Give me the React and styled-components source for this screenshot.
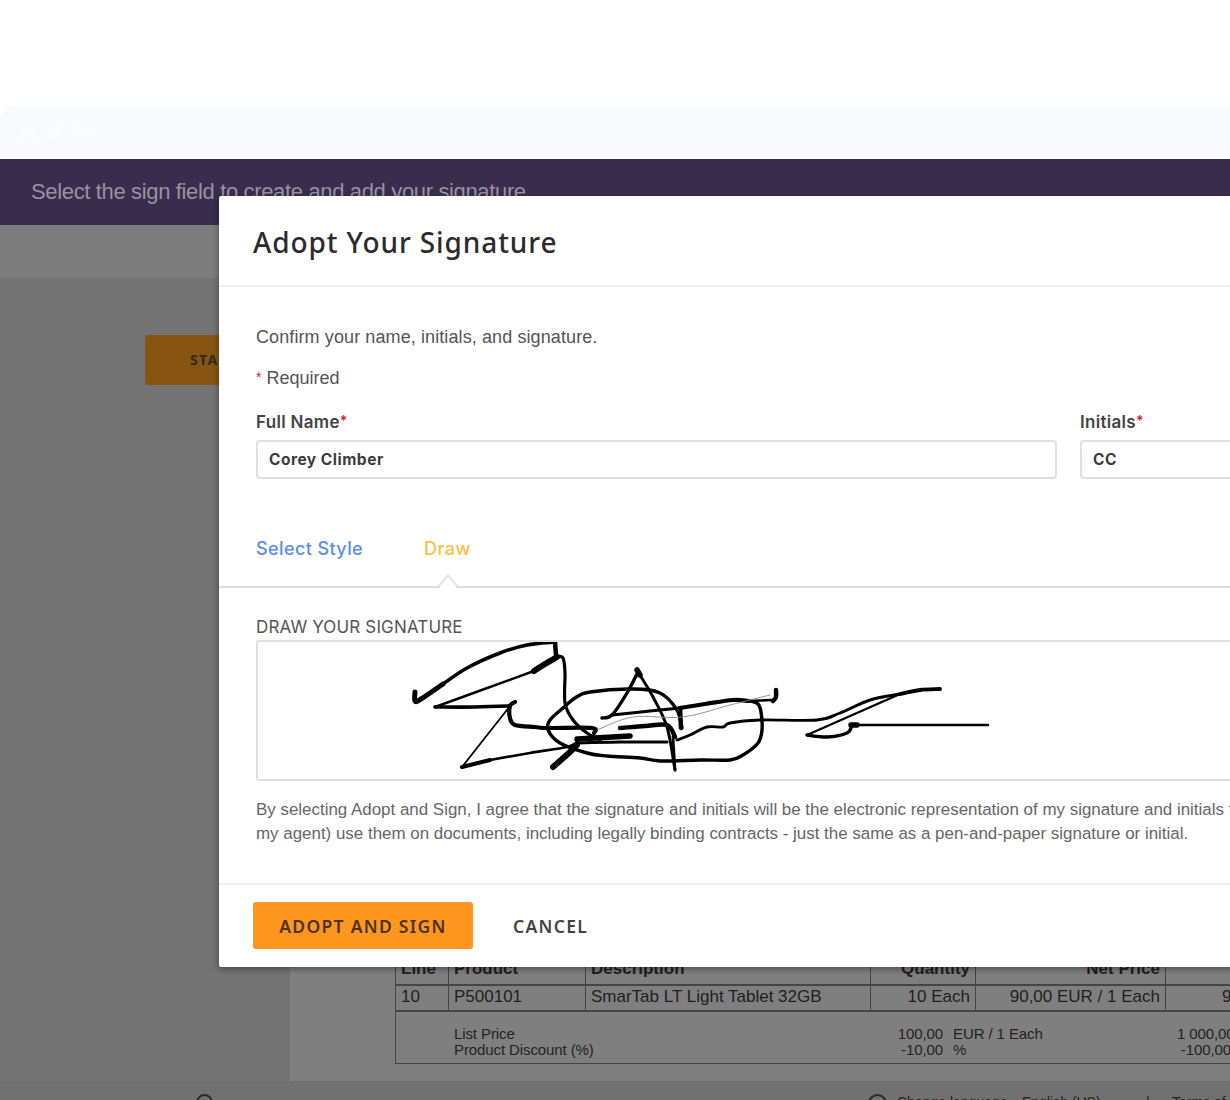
import React from "react";
import styled, { createGlobalStyle } from "styled-components";

const Global = createGlobalStyle`
  html, body { margin: 0; padding: 0; background: #fff; }
  * { box-sizing: border-box; }
`;
const Sans = `"Liberation Sans", Arial, sans-serif`;
const Ui = `"Inter", "Liberation Sans", sans-serif`;
const Title = `"Noto Sans", "Open Sans", sans-serif`;

const Page = styled.div`
  position: relative; width: 1230px; height: 1100px; overflow: hidden;
  padding-top: 107px; background: #fff; font-family: ${Sans};
`;
const Chrome = styled.div`
  height: 52px; background: #f9fafb; border-radius: 14px 0 0 0;
  display: flex; align-items: center; gap: 13px; padding-left: 21px;
`;
const Dot = styled.span`width: 14px; height: 14px; border-radius: 50%; background: #fbfcfd;`;
const Banner = styled.div`
  height: 66px; background: #392d4d; color: #98929f; font-size: 22px;
  letter-spacing: -0.35px; padding: 20px 0 0 31px; white-space: nowrap;
`;
const Toolbar = styled.div`height: 55px; background: #7c7c7c; border-bottom: 2px solid #737373;`;
const Body = styled.div`display: flex; height: 801px;`;
const Side = styled.div`
  width: 290px; background: #737373; padding: 55px 0 0 145px; border-right: 1px solid #6f6f6f;
`;
const Start = styled.div`
  width: 130px; height: 50px; background: #875511; border-radius: 2px; color: #2e2a20;
  font: 700 14px ${Title}; letter-spacing: 1.4px; padding: 15px 0 0 45px;
`;
const Doc = styled.div`flex: 1; background: #7f7f7f; padding: 678px 0 0 105px; overflow: hidden;`;
const Table = styled.div`
  width: 1000px; border: 1.5px solid #444; border-top: 0; color: #1e1e1e; font-size: 17px;
`;
const Row = styled.div`
  display: grid; grid-template-columns: 53px 137px 285px 105px 190px 1fr;
  height: ${p => p.$h}px; border-bottom: 2px solid #454545;
`;
const Cell = styled.div`
  border-right: 1.5px solid #444; padding: 0 5px; line-height: 22px; white-space: nowrap;
  font-weight: ${p => (p.$head ? 700 : 400)}; text-align: ${p => (p.$right ? "right" : "left")};
  overflow: hidden;
`;
const LastCell = styled.div`padding: 0 0 0 56px; line-height: 22px; white-space: nowrap;`;
const Details = styled.div`
  height: 51px; padding: 14px 0 0 58px; display: grid; color: #232323;
  grid-template-columns: 433px 56px 234px 54px; font-size: 15px; line-height: 16px; letter-spacing: -0.1px;
`;
const Num = styled.div`text-align: right; white-space: nowrap;`;
const Unit = styled.div`padding-left: 10px; white-space: nowrap;`;
const Footer = styled.div`
  height: 60px; background: #717171; border-top: 1px solid #6d6d6d;
  display: flex; padding: 12px 0 0 196px; color: #1f1f1f; font-size: 14px; position: absolute;
  left: 0; right: 0; top: 1081px;
`;
const Help = styled.div`display: flex; margin-left: 655px; align-items: flex-start; white-space: nowrap;`;
const HelpItem = styled.span`width: ${p => p.$w}px; flex: none;`;
const Ring = styled.span`
  width: ${p => p.$s}px; height: ${p => p.$s}px; border-radius: 50%; border: 2px solid #2a2a2a;
  display: block; flex: none; margin-right: ${p => p.$m}px;
`;

const Modal = styled.div`
  position: absolute; left: 219px; top: 196px; width: 1100px; height: 771px; background: #fff;
  border-radius: 2px; box-shadow: 0 2px 6px rgba(0,0,0,.4); display: flex; flex-direction: column;
`;
const Head = styled.h2`
  margin: 0; height: 91px; padding: 26px 0 0 34px; border-bottom: 2px solid #efefef;
  font: 500 28px/40px ${Title}; letter-spacing: 0.9px; color: #2c2c2c;
`;
const Content = styled.div`padding: 39px 0 0 37px; flex: 1;`;
const Lead = styled.p`margin: 0; font-size: 18px; line-height: 22px; color: #555; letter-spacing: 0.1px;`;
const Req = styled.p`margin: 18px 0 0; font-size: 18px; line-height: 22px; color: #555;`;
const Star = styled.span`color: #e0202c; font-size: 14px; vertical-align: 2px;`;
const Fields = styled.div`display: flex; gap: 23px; margin-top: 21px;`;
const Field = styled.div`width: ${p => p.$w}px;`;
const Label = styled.label`display: block; font: 600 17px/22px ${Ui}; letter-spacing: 0.3px; color: #444;`;
const Input = styled.div`
  height: 39px; margin-top: 7px; border: 2px solid #e0e0e0; border-radius: 4px;
  padding: 0 11px; font: 700 15.5px/35px ${Ui}; letter-spacing: 0.5px; color: #3c3c3c; background: #fff;
`;
const Tabs = styled.div`
  display: flex; gap: 61px; margin: 59px 0 0 -37px; padding: 0 0 0 37px; height: 50px;
  border-bottom: 2px solid #dcdcdc; position: relative;
`;
const Tab = styled.span`font: 500 18px/22px ${Ui}; letter-spacing: 0.4px; color: ${p => p.$c};`;
const Caret = styled.span`
  position: absolute; left: 219px; bottom: -2px; width: 20px; height: 14px; display: block;
`;
const Cap = styled.div`margin-top: 28px; font: 400 17px/22px ${Ui}; letter-spacing: 0.15px; color: #555;`;
const Canvas = styled.div`
  height: 141px; border: 2px solid #e0e0e0; border-radius: 3px; margin-top: 2px; padding-left: 142px;
`;
const Legal = styled.p`
  margin: 17px 0 0; font-size: 16.93px; line-height: 24px; color: #666; white-space: nowrap;
`;
const Foot = styled.div`
  height: 84px; border-top: 2px solid #f1f1f1; display: flex; align-items: flex-start;
  padding: 17px 0 0 34px; gap: 40px; flex: none;
`;
const Primary = styled.button`
  width: 220px; height: 47px; border: 0; border-radius: 3px; background: #ff961f; color: #4b3415;
  font: 600 17.5px ${Title}; letter-spacing: 1.3px; padding: 0;
`;
const Ghost = styled.button`
  border: 0; background: none; height: 47px; padding: 0; color: #444;
  font: 600 17.5px ${Title}; letter-spacing: 1.3px;
`;

/* Catmull-Rom through the pen points, so each pen stroke is a smooth curve */
const curve = pts => {
  let d = `M${pts[0][0]} ${pts[0][1]}`;
  for (let i = 0; i < pts.length - 1; i++) {
    const p0 = pts[i - 1] || pts[i];
    const p1 = pts[i];
    const p2 = pts[i + 1];
    const p3 = pts[i + 2] || p2;
    const c1 = [p1[0] + (p2[0] - p0[0]) / 6, p1[1] + (p2[1] - p0[1]) / 6];
    const c2 = [p2[0] - (p3[0] - p1[0]) / 6, p2[1] - (p3[1] - p1[1]) / 6];
    d += `C${c1[0].toFixed(1)} ${c1[1].toFixed(1)} ${c2[0].toFixed(1)} ${c2[1].toFixed(1)} ${p2[0]} ${p2[1]}`;
  }
  return d;
};

const strokes = [
  [5, [[415, 692], [415, 701], [421, 699], [443, 684]]],
  [3.6, [[443, 684], [467, 668], [500, 653], [527, 645], [555, 642]]],
  [4.5, [[555, 642], [556, 655]]],
  [6, [[557, 657], [545, 664], [534, 671]]],
  [2.4, [[534, 671], [435, 707]]],
  [3.6, [[435, 707], [475, 707], [510, 706]]],
  [3.2, [[556, 656], [563, 658], [565, 673], [565, 703], [573, 720], [587, 733], [600, 740]]],
  [4.2, [[515, 702], [510, 706], [510, 718], [515, 725], [535, 727], [547, 728], [592, 728], [594, 733]]],
  [1.8, [[510, 706], [462, 767]]],
  [4, [[462, 767], [490, 760]]],
  [2.7, [[490, 760], [530, 753], [567, 747], [577, 742]]],
  [5.5, [[577, 739], [630, 736]]],
  [3, [[577, 743], [620, 742], [667, 742]]],
  [3.4, [[563, 708], [575, 698], [590, 692], [633, 689], [660, 693], [677, 710], [682, 728]]],
  [3.4, [[563, 708], [550, 720], [548, 730], [560, 743], [587, 753], [607, 756], [640, 758], [660, 761], [700, 760], [730, 760], [743, 755], [758, 743], [762, 730], [761, 712], [758, 704], [750, 701]]],
  [6, [[553, 767], [570, 752], [577, 745]]],
  [3.4, [[602, 718], [612, 715], [627, 693], [638, 672]]],
  [3, [[638, 672], [653, 697], [667, 727], [675, 770]]],
  [2.7, [[673, 737], [675, 770]]],
  [5.5, [[637, 670], [640, 675]]],
  [3, [[612, 715], [650, 711], [680, 708]]],
  [4.2, [[680, 708], [705, 704], [733, 700], [748, 701]]],
  [2.7, [[748, 701], [773, 700]]],
  [4.5, [[773, 701], [776, 697], [776, 690]]],
  [4.5, [[620, 728], [645, 726], [667, 725], [675, 737]]],
  [4.5, [[680, 708], [681, 728]]],
  [0.9, [[597, 730], [633, 717], [683, 717], [730, 705], [770, 695]], "#888"],
  [2.9, [[677, 740], [690, 735], [707, 727], [723, 727], [730, 723], [760, 720], [817, 720], [840, 713], [870, 700], [900, 694]]],
  [3.8, [[900, 694], [920, 690], [940, 689]]],
  [2.4, [[900, 694], [807, 735]]],
  [3.4, [[807, 735], [827, 737], [847, 733], [852, 725]]],
  [5.5, [[851, 725], [857, 725]]],
  [2.4, [[857, 725], [920, 725], [988, 725]]],
];

const Signature = () => (
  <svg width="600" height="137" viewBox="400 642 600 137" fill="none" stroke="#000" strokeLinecap="round" strokeLinejoin="round" style={{ display: "block" }}>
    {strokes.map(([w, pts, c], i) => (
      <path key={i} d={curve(pts)} strokeWidth={w} stroke={c || "#000"} />
    ))}
  </svg>
);

export default function App() {
  return (
    <Page>
      <Global />
      <Chrome><Dot /><Dot /><Dot /></Chrome>
      <Banner>Select the sign field to create and add your signature</Banner>
      <Toolbar />
      <Body>
        <Side><Start>START</Start></Side>
        <Doc>
          <Table>
            <Row $h={28}>
              <Cell $head>Line</Cell><Cell $head>Product</Cell><Cell $head>Description</Cell>
              <Cell $head $right>Quantity</Cell><Cell $head $right>Net Price</Cell><LastCell />
            </Row>
            <Row $h={26}>
              <Cell>10</Cell><Cell>P500101</Cell><Cell>SmarTab LT Light Tablet 32GB</Cell>
              <Cell $right>10 Each</Cell><Cell $right>90,00 EUR / 1 Each</Cell><LastCell>900,00 EUR</LastCell>
            </Row>
            <Details>
              <div>List Price<br />Product Discount (%)</div>
              <Num>100,00<br />-10,00</Num>
              <Unit>EUR / 1 Each<br />%</Unit>
              <Num>1 000,00<br />-100,00</Num>
            </Details>
          </Table>
        </Doc>
      </Body>
      <Footer>
        <Ring $s={17} />
        <Help>
          <Ring $s={19} $m={10} />
          <HelpItem $w={125}>Change language</HelpItem>
          <HelpItem $w={124}>English (US)</HelpItem>
          <HelpItem $w={26}>|</HelpItem>
          <HelpItem $w={100}>Terms of Use</HelpItem>
        </Help>
      </Footer>
      <Modal>
        <Head>Adopt Your Signature</Head>
        <Content>
          <Lead>Confirm your name, initials, and signature.</Lead>
          <Req><Star>*</Star> Required</Req>
          <Fields>
            <Field $w={801}>
              <Label>Full Name<Star>*</Star></Label>
              <Input>Corey Climber</Input>
            </Field>
            <Field $w={200}>
              <Label>Initials<Star>*</Star></Label>
              <Input>CC</Input>
            </Field>
          </Fields>
          <Tabs>
            <Tab $c="#5b8fe6">Select Style</Tab>
            <Tab $c="#fdc043">Draw</Tab>
            <Caret>
              <svg width="20" height="14" viewBox="0 0 20 14" fill="none" style={{ display: "block" }}>
                <path d="M0 13L10 1L20 13" fill="#fff" stroke="#dcdcdc" strokeWidth="1.6" />
                <path d="M2 13.5H18" stroke="#fff" strokeWidth="2" />
              </svg>
            </Caret>
          </Tabs>
          <Cap>DRAW YOUR SIGNATURE</Cap>
          <Canvas><Signature /></Canvas>
          <Legal>
            By selecting Adopt and Sign, I agree that the signature and initials will be the electronic representation of my signature and initials for all purposes when I (or<br />
            my agent) use them on documents, including legally binding contracts - just the same as a pen-and-paper signature or initial.
          </Legal>
        </Content>
        <Foot>
          <Primary>ADOPT AND SIGN</Primary>
          <Ghost>CANCEL</Ghost>
        </Foot>
      </Modal>
    </Page>
  );
}
